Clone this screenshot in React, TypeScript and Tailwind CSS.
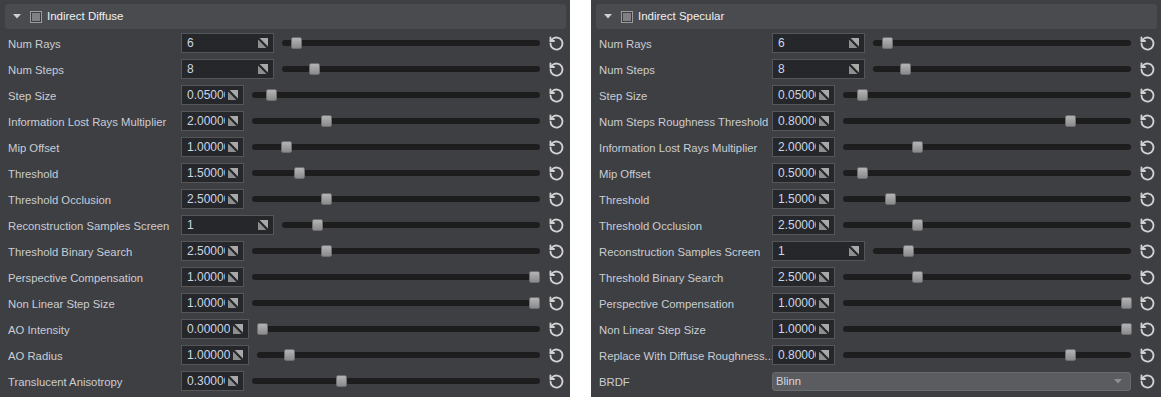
import React from "react";

type Row =
  | { label: string; kind: "int" | "float"; value: string; boxW: number; handle: number }
  | { label: string; kind: "dropdown"; value: string };

const left: Row[] = [
  { label: "Num Rays", kind: "int", value: "6", boxW: 93, handle: 296 },
  { label: "Num Steps", kind: "int", value: "8", boxW: 93, handle: 314 },
  { label: "Step Size", kind: "float", value: "0.05000", boxW: 63, handle: 271 },
  { label: "Information Lost Rays Multiplier", kind: "float", value: "2.00000", boxW: 63, handle: 326 },
  { label: "Mip Offset", kind: "float", value: "1.00000", boxW: 63, handle: 286 },
  { label: "Threshold", kind: "float", value: "1.50000", boxW: 63, handle: 299 },
  { label: "Threshold Occlusion", kind: "float", value: "2.50000", boxW: 63, handle: 326 },
  { label: "Reconstruction Samples Screen", kind: "int", value: "1", boxW: 93, handle: 317 },
  { label: "Threshold Binary Search", kind: "float", value: "2.50000", boxW: 63, handle: 326 },
  { label: "Perspective Compensation", kind: "float", value: "1.00000", boxW: 63, handle: 534 },
  { label: "Non Linear Step Size", kind: "float", value: "1.00000", boxW: 63, handle: 534 },
  { label: "AO Intensity", kind: "float", value: "0.00000", boxW: 68, handle: 262 },
  { label: "AO Radius", kind: "float", value: "1.00000", boxW: 68, handle: 289 },
  { label: "Translucent Anisotropy", kind: "float", value: "0.30000", boxW: 63, handle: 341 },
];

const right: Row[] = [
  { label: "Num Rays", kind: "int", value: "6", boxW: 93, handle: 296 },
  { label: "Num Steps", kind: "int", value: "8", boxW: 93, handle: 314 },
  { label: "Step Size", kind: "float", value: "0.05000", boxW: 63, handle: 271 },
  { label: "Num Steps Roughness Threshold", kind: "float", value: "0.80000", boxW: 63, handle: 479 },
  { label: "Information Lost Rays Multiplier", kind: "float", value: "2.00000", boxW: 63, handle: 326 },
  { label: "Mip Offset", kind: "float", value: "0.50000", boxW: 63, handle: 271 },
  { label: "Threshold", kind: "float", value: "1.50000", boxW: 63, handle: 299 },
  { label: "Threshold Occlusion", kind: "float", value: "2.50000", boxW: 63, handle: 326 },
  { label: "Reconstruction Samples Screen", kind: "int", value: "1", boxW: 93, handle: 317 },
  { label: "Threshold Binary Search", kind: "float", value: "2.50000", boxW: 63, handle: 326 },
  { label: "Perspective Compensation", kind: "float", value: "1.00000", boxW: 63, handle: 535 },
  { label: "Non Linear Step Size", kind: "float", value: "1.00000", boxW: 63, handle: 535 },
  { label: "Replace With Diffuse Roughness...", kind: "float", value: "0.80000", boxW: 63, handle: 479 },
  { label: "BRDF", kind: "dropdown", value: "Blinn" },
];

function DragIcon() {
  return (
    <svg width="10" height="10" viewBox="0 0 10 10" className="shrink-0">
      <polygon points="0,0 10,0 10,10" fill="#a9a9a9" />
      <polygon points="0,0 0,10 10,10" fill="#8f8f8f" />
      <line x1="0" y1="0" x2="10" y2="10" stroke="#262729" strokeWidth="2.2" />
    </svg>
  );
}

function ResetIcon() {
  return (
    <svg width="17" height="17" viewBox="0 0 24 24" fill="none" stroke="#d2d2d2" strokeWidth="2.6" strokeLinecap="round" strokeLinejoin="round">
      <path d="M3.5 12a8.5 8.5 0 1 0 2.6-6.1L3.5 8.5" />
      <path d="M3.5 3.5v5h5" />
    </svg>
  );
}

function RowView({ row }: { row: Row }) {
  return (
    <div className="flex h-[26px] items-center">
      <div className="w-[176px] shrink-0 overflow-hidden whitespace-nowrap pl-[3px] pt-[2px] text-[11.3px] text-[#c9cdd3]">{row.label}</div>
      {row.kind === "dropdown" ? (
        <div className="flex h-[19px] w-[359px] shrink-0 items-center justify-between rounded-[3px] border border-[#6a6b6f] bg-[#5b5c60] pl-[3px] pr-[8px] text-[11.3px] text-[#d4d6da]">
          <span>{row.value}</span>
          <svg width="8" height="5" viewBox="0 0 8 5">
            <polygon points="0,0 8,0 4,4.5" fill="#8e8f93" />
          </svg>
        </div>
      ) : (
        <>
          <div
            className="flex h-[20px] shrink-0 items-center overflow-hidden border border-[#55565a] bg-[#26272a] pl-[5px] pr-[5px] text-[12px] text-[#cbd6e6]"
            style={{ width: row.boxW }}
          >
            <span className="min-w-0 flex-1 overflow-hidden whitespace-nowrap">{row.value}</span>
            <span className="ml-[3px] flex shrink-0 items-center">
              <DragIcon />
            </span>
          </div>
          <div className="relative ml-[8px] flex h-[20px] flex-1 items-center">
            <div className="h-[6px] w-full rounded-full bg-[#1d1d1e]" />
            <div
              className="absolute top-[4px] h-[12px] w-[11px] rounded-[2px] border border-[#6e6e70] bg-gradient-to-b from-[#b4b4b6] to-[#8a8a8c]"
              style={{ left: row.handle - (181 + row.boxW + 8) - 5 }}
            />
          </div>
        </>
      )}
      <div className="flex w-[26px] shrink-0 items-center pl-[8px]">
        <ResetIcon />
      </div>
    </div>
  );
}

function Panel({ title, rows }: { title: string; rows: Row[] }) {
  return (
    <div className="h-[397px] w-[570px] shrink-0 bg-[#3e3f43] pl-[5px] pr-[4px] pt-[4px]">
      <div className="flex h-[25px] items-center rounded-[3px] bg-[#4a4b4f]">
        <svg width="8" height="5" viewBox="0 0 8 5" className="ml-[8px]">
          <polygon points="0,0 8,0 4,4.5" fill="#d0d0d0" />
        </svg>
        <div className="ml-[9px] flex h-[12px] w-[12px] items-center justify-center border border-[#9c9c9e] bg-[#3c3d40]">
          <div className="h-[8px] w-[8px] bg-[#808083]" />
        </div>
        <span className="ml-[5px] pt-[1px] text-[11.5px] text-[#eef0f2]">{title}</span>
      </div>
      <div className="mt-[1px] flex flex-col">
        {rows.map((r, i) => (
          <RowView key={i} row={r} />
        ))}
      </div>
    </div>
  );
}

export default function App() {
  return (
    <div className="flex h-[397px] w-[1161px] bg-white" style={{ fontFamily: '"Liberation Sans", Arial, sans-serif' }}>
      <Panel title="Indirect Diffuse" rows={left} />
      <div className="w-[21px] shrink-0" />
      <Panel title="Indirect Specular" rows={right} />
    </div>
  );
}
